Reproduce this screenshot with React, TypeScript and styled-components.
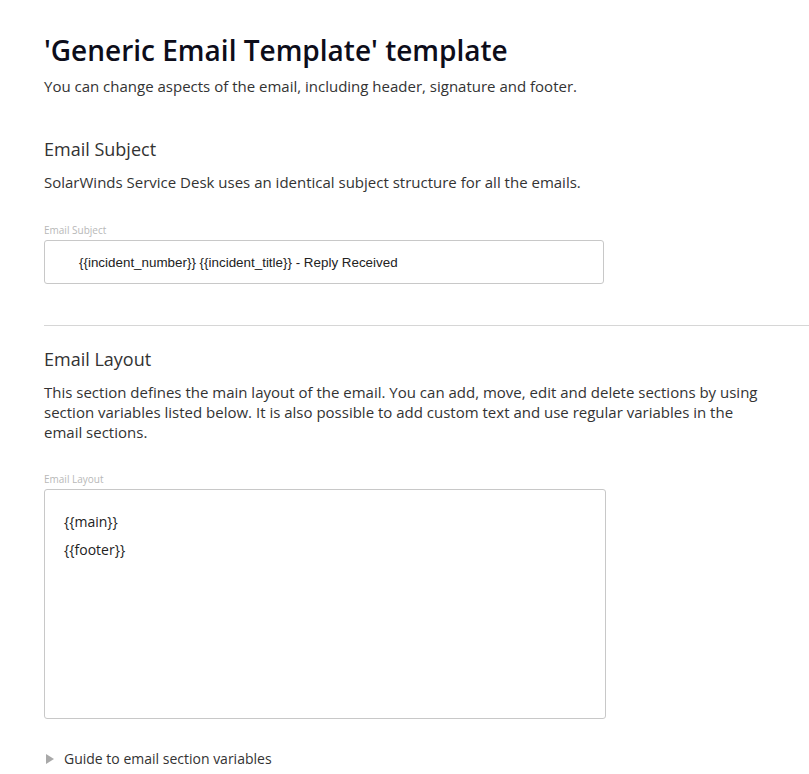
import React from "react";
import styled, { createGlobalStyle } from "styled-components";

const Global = createGlobalStyle`
  html, body { margin: 0; padding: 0; background: #fff; }
  body { font-family: "Open Sans", "Noto Sans", sans-serif; color: #333; }
  * { box-sizing: border-box; }
`;

const Page = styled.div`
  padding: 30px 0 0 44px;
  display: flex;
  flex-direction: column;
`;

const Title = styled.h1`
  margin: 0;
  font-size: 28px;
  font-weight: 600;
  line-height: 40px;
  color: #0d0d1a;
`;

const Lead = styled.p`
  margin: 6px 0 0 0;
  font-size: 15px;
  line-height: 20px;
  color: #333;
`;

const Section = styled.section<{ $top: number }>`
  display: flex;
  flex-direction: column;
  padding-top: ${(p) => p.$top}px;
`;

const SectionTitle = styled.h2`
  margin: 0 0 10px 0;
  font-size: 18px;
  font-weight: 400;
  line-height: 26px;
  color: #333;
`;

const Text = styled.p`
  margin: 0;
  font-size: 15px;
  line-height: 20px;
  color: #333;
  max-width: 730px;
`;

const Field = styled.div<{ $top: number }>`
  display: flex;
  flex-direction: column;
  margin-top: ${(p) => p.$top}px;
`;

const Label = styled.label`
  font-size: 10px;
  line-height: 14px;
  color: #b8b8b8;
  margin-bottom: 3px;
`;

const Input = styled.div`
  width: 560px;
  height: 44px;
  border: 1px solid #c8c8c8;
  border-radius: 3px;
  padding: 0 0 0 34px;
  display: flex;
  align-items: center;
  font-family: "Liberation Sans", Arial, sans-serif;
  font-size: 13.4px;
  color: #222;
`;

const Divider = styled.hr`
  margin: 41px 0 0 0;
  border: none;
  border-top: 1px solid #d6d6d6;
`;

const TextArea = styled.div`
  width: 562px;
  height: 230px;
  border: 1px solid #c8c8c8;
  border-radius: 3px;
  padding: 22px 0 0 19px;
  display: flex;
  flex-direction: column;
  gap: 8px;
  font-size: 14px;
  line-height: 20px;
  color: #222;
`;

const Guide = styled.div`
  display: flex;
  align-items: center;
  gap: 10px;
  margin-top: 30px;
  padding-left: 2px;
  font-size: 14px;
  line-height: 20px;
  color: #333;
`;

const Caret = styled.span`
  width: 0;
  height: 0;
  border-top: 5px solid transparent;
  border-bottom: 5px solid transparent;
  border-left: 8px solid #a9a9a9;
`;

export default function App() {
  return (
    <>
      <Global />
      <Page>
        <Title>'Generic Email Template' template</Title>
        <Lead>You can change aspects of the email, including header, signature and footer.</Lead>

        <Section $top={40}>
          <SectionTitle>Email Subject</SectionTitle>
          <Text>SolarWinds Service Desk uses an identical subject structure for all the emails.</Text>
          <Field $top={31}>
            <Label>Email Subject</Label>
            <Input>{"{{incident_number}} {{incident_title}} - Reply Received"}</Input>
          </Field>
        </Section>

        <Divider />

        <Section $top={20}>
          <SectionTitle>Email Layout</SectionTitle>
          <Text>
            This section defines the main layout of the email. You can add, move, edit and delete sections by using
            section variables listed below. It is also possible to add custom text and use regular variables in the
            email sections.
          </Text>
          <Field $top={30}>
            <Label>Email Layout</Label>
            <TextArea>
              <div>{"{{main}}"}</div>
              <div>{"{{footer}}"}</div>
            </TextArea>
          </Field>
        </Section>

        <Guide>
          <Caret />
          <span>Guide to email section variables</span>
        </Guide>
      </Page>
    </>
  );
}
